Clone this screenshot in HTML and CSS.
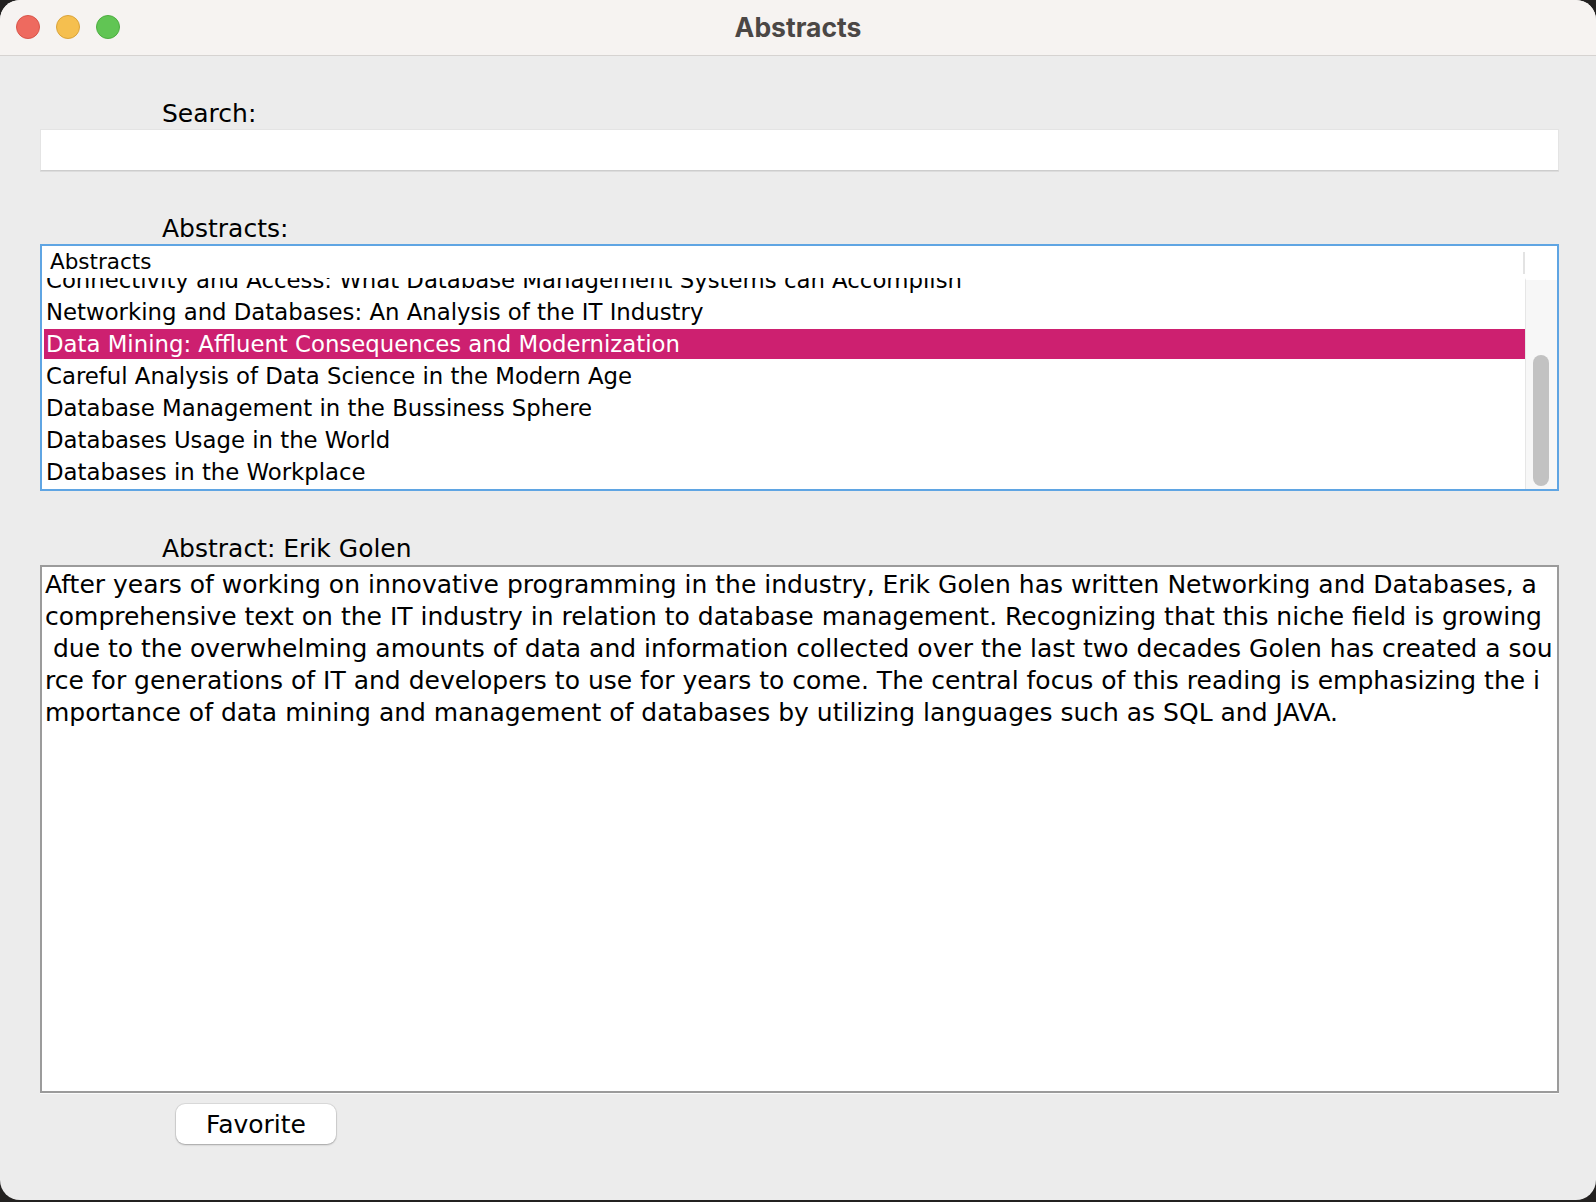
FILE: index.html
```html
<!DOCTYPE html>
<html lang="en">
<head>
<meta charset="utf-8">
<title>Abstracts</title>
<link rel="stylesheet" href="styles.css">
</head>
<body>
<div class="window">
  <header class="titlebar">
    <div class="lights">
      <span class="light red"></span>
      <span class="light yellow"></span>
      <span class="light green"></span>
    </div>
    <div class="title">Abstracts</div>
  </header>
  <main class="content">
    <div class="label">Search:</div>
    <div class="search"></div>
    <div class="label">Abstracts:</div>
    <div class="list">
      <div class="list-head">
        <div class="col-head">Abstracts</div>
        <div class="corner"></div>
      </div>
      <div class="list-body">
        <div class="viewport">
          <div class="rows">
            <div class="row"><span>Connectivity and Access: What Database Management Systems can Accomplish</span></div>
            <div class="row"><span>Networking and Databases: An Analysis of the IT Industry</span></div>
            <div class="row selected"><span>Data Mining: Affluent Consequences and Modernization</span></div>
            <div class="row"><span>Careful Analysis of Data Science in the Modern Age</span></div>
            <div class="row"><span>Database Management in the Bussiness Sphere</span></div>
            <div class="row"><span>Databases Usage in the World</span></div>
            <div class="row"><span>Databases in the Workplace</span></div>
          </div>
        </div>
        <div class="vscroll"><div class="thumb"></div></div>
      </div>
    </div>
    <div class="label">Abstract: Erik Golen</div>
    <div class="textarea">
      <div class="line">After years of working on innovative programming in the industry, Erik Golen has written Networking and Databases, a </div>
      <div class="line">comprehensive text on the IT industry in relation to database management. Recognizing that this niche field is growing</div>
      <div class="line"> due to the overwhelming amounts of data and information collected over the last two decades Golen has created a sou</div>
      <div class="line">rce for generations of IT and developers to use for years to come. The central focus of this reading is emphasizing the i</div>
      <div class="line">mportance of data mining and management of databases by utilizing languages such as SQL and JAVA.</div>
    </div>
    <div class="actions"><button class="btn">Favorite</button></div>
  </main>
</div>
</body>
</html>
```

FILE: styles.css
```css
* { box-sizing: border-box; }
html, body { margin: 0; padding: 0; }
body {
  width: 1596px;
  height: 1202px;
  background: #232120;
  font-family: "DejaVu Sans", Verdana, sans-serif;
  color: #000;
  overflow: hidden;
}
.window {
  width: 1596px;
  height: 1200px;
  border-radius: 20px;
  overflow: hidden;
  background: #ececec;
  display: flex;
  flex-direction: column;
}
.titlebar {
  height: 56px;
  flex: none;
  background: #f6f3f1;
  border-bottom: 1px solid #d6d3d1;
  position: relative;
  display: flex;
  align-items: center;
  justify-content: center;
}
.lights {
  position: absolute;
  left: 16px;
  top: 15px;
  display: flex;
  gap: 16px;
}
.light {
  width: 24px;
  height: 24px;
  border-radius: 50%;
  display: block;
}
.red { background: #ee6a5f; border: 1px solid #d8554a; }
.yellow { background: #f5bf4f; border: 1px solid #d9a33a; }
.green { background: #61c554; border: 1px solid #4ead41; }
.title {
  font-family: Inter, "Liberation Sans", sans-serif;
  font-weight: 700;
  font-size: 26.5px;
  color: #4b4745;
  line-height: 32px;
  margin-top: -2px;
}
.content {
  flex: 1;
  padding: 0 37px 0 40px;
  display: flex;
  flex-direction: column;
}
.label {
  font-size: 25px;
  line-height: 30px;
  height: 30px;
  padding-left: 122px;
  margin-top: 43px;
  white-space: nowrap;
}
.search {
  height: 42px;
  background: #fff;
  border: 1px solid #e4e4e4;
  border-bottom: 1px solid #cdcdcd;
  box-shadow: 0 1px 0 #dcdcdc;
}
.list {
  height: 247px;
  border: 2px solid #5fa5e3;
  background: #fff;
  display: flex;
  flex-direction: column;
}
.list-head {
  height: 32px;
  flex: none;
  display: flex;
}
.col-head {
  flex: 1;
  font-size: 21.5px;
  line-height: 32px;
  padding-left: 8px;
  position: relative;
  white-space: nowrap;
}
.col-head::after {
  content: "";
  position: absolute;
  right: 0;
  top: 6px;
  width: 2px;
  height: 22px;
  background: #e3e3e3;
}
.corner { width: 32px; }
.list-body {
  flex: 1;
  display: flex;
  min-height: 0;
}
.viewport {
  flex: 1;
  overflow: hidden;
}
.rows { margin-top: -14px; }
.row {
  height: 32px;
  padding: 1px 0 1px 2px;
  font-size: 22.8px;
  white-space: nowrap;
}
.row span {
  display: block;
  height: 30px;
  line-height: 30px;
  padding-left: 2px;
}
.row.selected span {
  background: #cd2070;
  color: #fff;
}
.vscroll {
  width: 32px;
  flex: none;
  border-top: 2px solid #fff;
  border-left: 1px solid #e6e6e6;
  background: #f7f7f7;
  padding: 75px 7px 0 7px;
}
.thumb {
  width: 16px;
  height: 131px;
  border-radius: 8px;
  background: #c2c2c2;
}
.textarea {
  height: 528px;
  margin-top: 1px;
  background: #fff;
  border: 2px solid #9b9b9b;
  box-shadow: 0 1px 0 #fafafa;
  padding: 2px 0 0 3px;
  font-size: 25px;
  line-height: 32px;
}
.line { white-space: pre; height: 32px; }
.actions {
  padding-left: 136px;
  margin-top: 11px;
}
.btn {
  width: 160px;
  height: 40px;
  border: none;
  border-radius: 9px;
  background: #fff;
  box-shadow: 0 0 0 1px rgba(0,0,0,0.07), 0 1px 2px rgba(0,0,0,0.25);
  font-family: "DejaVu Sans", Verdana, sans-serif;
  font-size: 25px;
  color: #000;
  padding: 0;
}
```
